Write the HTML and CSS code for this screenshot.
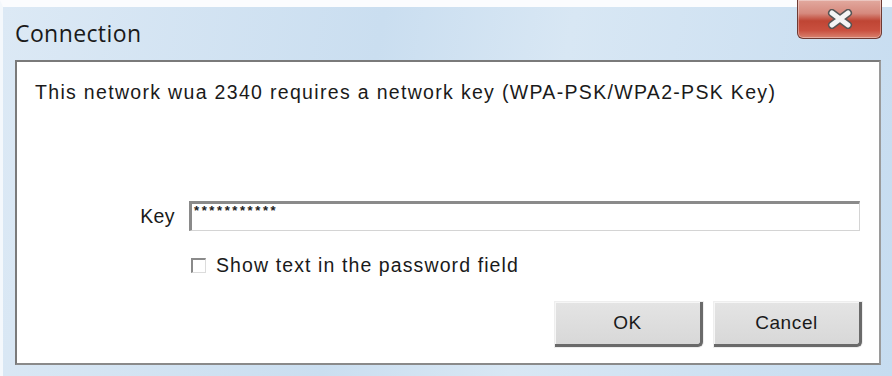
FILE: index.html
```html
<!DOCTYPE html>
<html>
<head>
<meta charset="utf-8">
<link rel="stylesheet" href="styles.css">
</head>
<body>
<div class="window">
  <div class="titlebar">
    <span class="title">Connection</span>
    <button class="close" aria-label="Close">
      <svg width="28" height="20" viewBox="0 0 28 20">
        <path d="M6 4 L22 16 M22 4 L6 16" stroke="#555555" stroke-width="8" stroke-linecap="round" fill="none"/>
        <path d="M6 4 L22 16 M22 4 L6 16" stroke="#f4f4f4" stroke-width="5" stroke-linecap="round" fill="none"/>
      </svg>
    </button>
  </div>
  <div class="panel">
    <p class="message">This network wua 2340 requires a network key (WPA-PSK/WPA2-PSK Key)</p>
    <div class="key-row">
      <label class="key-label">Key</label>
      <div class="key-input">***********</div>
    </div>
    <div class="check-row">
      <span class="checkbox"></span>
      <span class="check-label">Show text in the password field</span>
    </div>
    <div class="buttons">
      <button class="btn">OK</button>
      <button class="btn">Cancel</button>
    </div>
  </div>
</div>
</body>
</html>
```

FILE: styles.css
```css
html, body {
  margin: 0;
  padding: 0;
  width: 892px;
  height: 376px;
  overflow: hidden;
  background: #ffffff;
}

.window {
  box-sizing: border-box;
  width: 892px;
  height: 376px;
  padding: 0 11px 11px 12px;
  background: linear-gradient(100deg, #dce9f5 0%, #cadef0 40%, #d8e7f4 60%, #c6dcf0 100%);
  border-top: 7px solid #fbfcfe;
  border-left: 3px solid #f4f8fc;
  display: flex;
  flex-direction: column;
}

.titlebar {
  height: 53px;
  display: flex;
  justify-content: space-between;
  align-items: flex-start;
}

.title {
  font-family: "Open Sans", "Noto Sans", sans-serif;
  font-size: 23px;
  color: #1a1a1a;
  margin-top: 10px;
  margin-left: 0;
  letter-spacing: 0.4px;
}

.close {
  margin-top: -7px;
  margin-right: -1px;
  width: 85px;
  height: 39px;
  border: 1px solid #6e3a33;
  border-top: none;
  border-radius: 0 0 6px 6px;
  background: linear-gradient(180deg, #e2a99f 0%, #d68a7e 35%, #bf4534 55%, #c9503f 80%, #d9826f 100%);
  box-shadow: inset 0 0 0 1px rgba(255,255,255,0.35);
  display: flex;
  align-items: center;
  justify-content: center;
  padding: 0;
}

.panel {
  flex: 1;
  background: #ffffff;
  border-top: 2px solid #7a7a7a;
  border-left: 2px solid #7a7a7a;
  border-right: 2px solid #9a9a9a;
  border-bottom: 2px solid #8a8a8a;
  font-family: "Liberation Sans", Arial, sans-serif;
  color: #1a1a1a;
  display: flex;
  flex-direction: column;
}

.message {
  margin: 19px 0 0 18px;
  font-size: 19.5px;
  line-height: 22px;
  letter-spacing: 1.32px;
}

.key-row {
  display: flex;
  align-items: center;
  margin-top: 98px;
}

.key-label {
  width: 172px;
  text-align: right;
  font-size: 19.5px;
  padding-right: 14px;
  box-sizing: border-box;
  letter-spacing: 0.4px;
}

.key-input {
  width: 671px;
  height: 30px;
  box-sizing: border-box;
  border-top: 3px solid #8a8a8a;
  border-left: 3px solid #8a8a8a;
  border-right: 1px solid #d4d4d4;
  border-bottom: 1px solid #d4d4d4;
  font-size: 13px;
  font-weight: bold;
  letter-spacing: 2.6px;
  line-height: 14px;
  padding-left: 2px;
  color: #222;
}

.check-row {
  display: flex;
  align-items: center;
  margin-top: 23px;
  margin-left: 174px;
  height: 22px;
}

.checkbox {
  width: 12px;
  height: 12px;
  border-top: 2px solid #8a8a8a;
  border-left: 2px solid #8a8a8a;
  border-right: 1px solid #dcdcdc;
  border-bottom: 1px solid #dcdcdc;
  background: #fff;
}

.check-label {
  margin-left: 10px;
  font-size: 19.5px;
  letter-spacing: 1.1px;
}

.buttons {
  display: flex;
  justify-content: flex-end;
  gap: 11px;
  margin-top: 26px;
  margin-right: 17px;
}

.btn {
  width: 148px;
  height: 45px;
  box-sizing: border-box;
  border: none;
  border-right: 3px solid #6a6a6a;
  border-bottom: 3px solid #6a6a6a;
  border-radius: 0 0 5px 0;
  background: linear-gradient(180deg, #e4e4e4 0%, #d8d8d8 100%);
  box-shadow: inset 1px 1px 0 #f6f6f6, 0 0 0 1px #eeeeee;
  font-family: "Liberation Sans", Arial, sans-serif;
  font-size: 19px;
  color: #1a1a1a;
  letter-spacing: 0.6px;
  padding: 0;
}
```
